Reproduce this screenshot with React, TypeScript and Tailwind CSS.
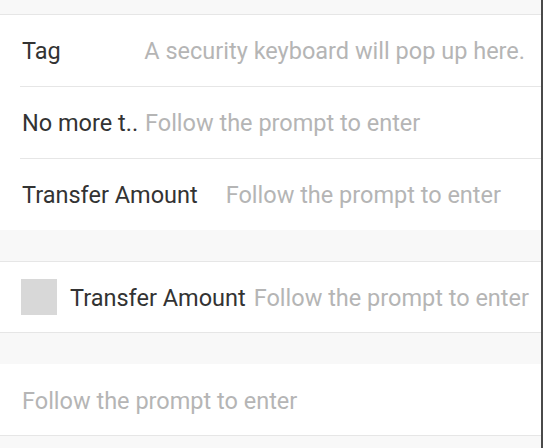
import React from "react";

const font = { fontFamily: "Roboto, 'Noto Sans', sans-serif" };

function Row({
  label,
  placeholder,
  labelClass = "",
  divider = true,
}: {
  label?: string;
  placeholder: string;
  labelClass?: string;
  divider?: boolean;
}) {
  return (
    <div>
      <div className="flex items-center h-[71px] pl-[22px] pr-4 pt-[2px] text-[23.5px]">
        {label && (
          <span className={`text-[#333] whitespace-nowrap overflow-hidden ${labelClass}`}>
            {label}
          </span>
        )}
        <span className="text-[#b5b5b5] whitespace-nowrap">{placeholder}</span>
      </div>
      {divider && <div className="ml-5 h-px bg-[#e6e6e6]" />}
    </div>
  );
}

export default function App() {
  return (
    <div className="h-[448px] bg-[#f8f8f8] border-r-2 border-[#4a4a4a] overflow-hidden" style={font}>
      <div className="h-[14px]" />
      <div className="bg-white border-t border-[#e6e6e6]">
        <Row label="Tag" placeholder="A security keyboard will pop up here." labelClass="w-[126px]" />
        <Row label="No more t.." placeholder="Follow the prompt to enter" labelClass="w-[123px]" />
        <Row label="Transfer Amount" placeholder="Follow the prompt to enter" labelClass="mr-[28px]" divider={false} />
      </div>

      <div className="h-[31px]" />
      <div className="bg-white border-y border-[#e6e6e6]">
        <div className="flex items-center h-[70px] pl-[21px] pr-4 text-[23.5px]">
          <span className="w-[36px] h-[36px] bg-[#d8d8d8] mr-[13px] shrink-0" />
          <span className="text-[#333] whitespace-nowrap mr-[8px] pt-1">Transfer Amount</span>
          <span className="text-[#b5b5b5] whitespace-nowrap pt-1">Follow the prompt to enter</span>
        </div>
      </div>

      <div className="h-[31px]" />
      <div className="bg-white border-b border-[#e6e6e6]">
        <div className="flex items-center h-[71px] pl-[22px] pr-4 pt-1 text-[23.5px]">
          <span className="text-[#b5b5b5] whitespace-nowrap">Follow the prompt to enter</span>
        </div>
      </div>
    </div>
  );
}
